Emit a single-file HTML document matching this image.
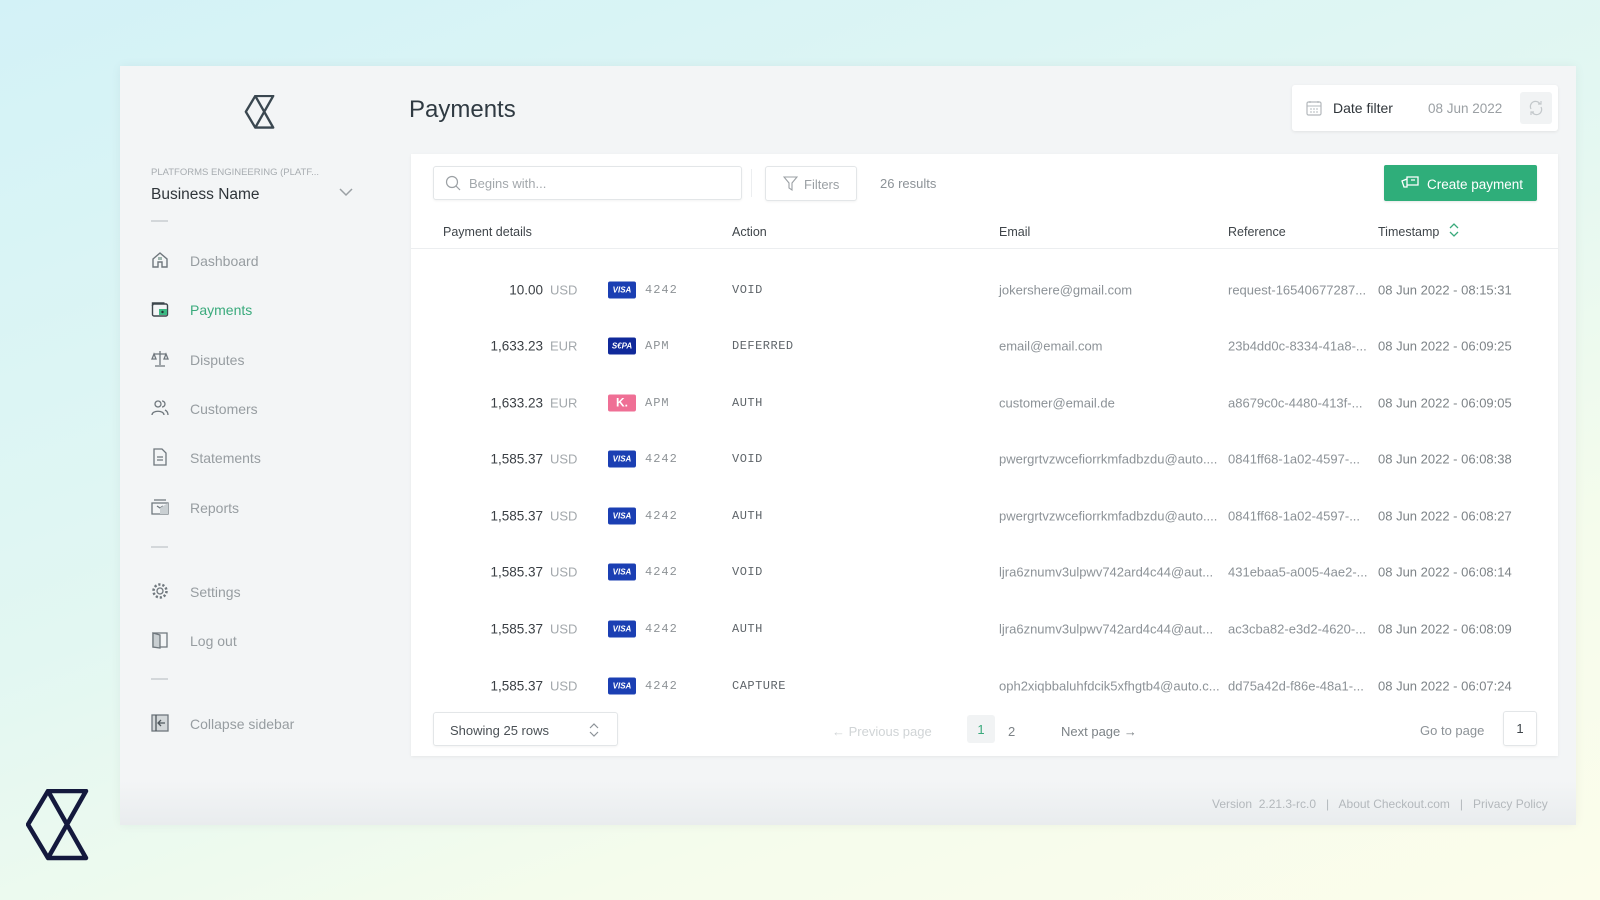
<!DOCTYPE html>
<html><head><meta charset="utf-8"><style>
*{margin:0;padding:0;box-sizing:border-box}
body{width:1600px;height:900px;overflow:hidden;position:relative;font-family:"Liberation Sans",sans-serif;
background:linear-gradient(160deg,#d3f2f7 0%,#e2f7f2 45%,#f5fcec 75%,#fcfdeb 100%);}
.win{position:absolute;left:120px;top:66px;width:1456px;height:759px;background:#f3f5f6;
background:linear-gradient(#f3f5f6 0,#f3f5f6 715px,#e9ecee 759px);box-shadow:0 0 10px rgba(0,0,0,.05)}
.a{position:absolute;white-space:nowrap}
.nav{position:absolute;left:190px;font-size:14px;color:#979da1;transform:translateY(-50%)}
.ico{position:absolute;left:151px;width:18px;height:18px;transform:translateY(-50%)}
.dash{position:absolute;left:151px;width:17px;height:2px;background:#d3d7da}
.card{position:absolute;left:411px;top:154px;width:1147px;height:602px;background:#fff;box-shadow:0 1px 3px rgba(0,0,0,.06)}
.box{position:absolute;border:1px solid #e3e6e8;border-radius:3px;background:#fff;box-shadow:0 1px 2px rgba(0,0,0,.05)}
.row{position:absolute;left:0;width:100%;font-size:13px}
.row span{position:absolute;top:1px;transform:translateY(-50%);white-space:nowrap}
.amt{right:calc(100% - 543px + 411px);color:#3a3f44;font-size:13.5px}
.cur{left:139px;color:#a3a8ac}
.badge{left:197px;width:28px;height:17px;border-radius:2px;color:#fff;font-size:8px;font-weight:bold;text-align:center;line-height:17px;font-style:italic}
.l4{left:234px;font-family:"Liberation Mono",monospace;color:#8e9397;font-size:12px;letter-spacing:1px}
.act{left:321px;font-family:"Liberation Mono",monospace;color:#5f656a;font-size:12px;letter-spacing:.5px}
.em{left:588px;color:#8c9297}
.ref{left:817px;color:#8c9297}
.ts{left:967px;color:#7d8387}
.hd{position:absolute;top:78px;font-size:12.5px;color:#3f454a;transform:translateY(-50%)}
</style></head><body>
<svg class="a" style="left:26px;top:789px" width="64" height="72" viewBox="0 0 64 72"><path d="M22 2H60L22 69H60L22 2L2 35.5L22 69" fill="none" stroke="#14193d" stroke-width="4.5" stroke-linejoin="round"/></svg>
<div class="win">
<svg class="a" style="left:124px;top:29px" width="32" height="34" viewBox="0 0 64 72"><path d="M22 2H60L22 69H60L22 2L2 35.5L22 69" fill="none" stroke="#3a4750" stroke-width="5" stroke-linejoin="round"/></svg>
</div>
<div class="a" style="left:151px;top:167px;font-size:9.5px;color:#a7acb0">PLATFORMS ENGINEERING (PLATF...</div>
<div class="a" style="left:151px;top:186px;font-size:15.5px;color:#2f353a">Business Name</div>
<svg class="a" style="left:339px;top:188px" width="14" height="9"><path d="M1 1L7 7L13 1" fill="none" stroke="#9aa0a4" stroke-width="1.5"/></svg>
<div class="dash" style="top:220px"></div>

<svg class="ico" style="top:260px" viewBox="0 0 18 18"><path d="M2 8L9 2L16 8V16H11V11H7V16H2Z" fill="none" stroke="#6f777d" stroke-width="1.4"/><rect x="7" y="6" width="4" height="3" fill="#9fb5ae"/></svg>
<div class="nav" style="top:261px">Dashboard</div>
<svg class="ico" style="top:309px" viewBox="0 0 18 18"><rect x="1.5" y="4" width="15" height="12" rx="1.5" fill="none" stroke="#3d464c" stroke-width="1.4"/><path d="M1.5 6V3h12" fill="none" stroke="#3d464c" stroke-width="1.4"/><rect x="8" y="9" width="8" height="6" fill="#3cb983"/><circle cx="11.5" cy="12" r="1.2" fill="#233"/></svg>
<div class="nav" style="top:310px;color:#3aaa7c">Payments</div>
<svg class="ico" style="top:359px" viewBox="0 0 18 18"><path d="M9 1V15M3 4H15M3 4L1 9H5ZM15 4L13 9H17ZM4 16H14" fill="none" stroke="#6f777d" stroke-width="1.3"/></svg>
<div class="nav" style="top:360px">Disputes</div>
<svg class="ico" style="top:408px" viewBox="0 0 18 18"><circle cx="7" cy="5" r="3" fill="none" stroke="#6f777d" stroke-width="1.3"/><path d="M1 16C1 11 13 11 13 16M11 2A3 3 0 0 1 11 8M14 11C16 12 17 14 17 16" fill="none" stroke="#6f777d" stroke-width="1.3"/></svg>
<div class="nav" style="top:409px">Customers</div>
<svg class="ico" style="top:457px" viewBox="0 0 18 18"><path d="M3 1H11L15 5V17H3Z M6 9H12M6 12H12" fill="none" stroke="#6f777d" stroke-width="1.3"/></svg>
<div class="nav" style="top:458px">Statements</div>
<svg class="ico" style="top:507px" viewBox="0 0 18 18"><path d="M1 5H17V16H1Z M3 2H15M6 8L9 10L12 8" fill="none" stroke="#6f777d" stroke-width="1.3"/><path d="M9 10L17 5V16H9Z" fill="#c9cfd2"/></svg>
<div class="nav" style="top:508px">Reports</div>
<div class="dash" style="top:546px"></div>
<svg class="ico" style="top:591px" viewBox="0 0 18 18"><circle cx="9" cy="9" r="3" fill="none" stroke="#6f777d" stroke-width="1.3"/><circle cx="9" cy="9" r="6.5" fill="none" stroke="#6f777d" stroke-width="2.5" stroke-dasharray="2.2 1.9"/></svg>
<div class="nav" style="top:592px">Settings</div>
<svg class="ico" style="top:640px" viewBox="0 0 18 18"><path d="M2 2H16V16H2Z" fill="none" stroke="#6f777d" stroke-width="1.3"/><path d="M2 2L9 4V17L2 16Z" fill="#c9cfd2" stroke="#6f777d" stroke-width="1.3"/></svg>
<div class="nav" style="top:641px">Log out</div>
<div class="dash" style="top:678px"></div>
<svg class="ico" style="top:723px" viewBox="0 0 18 18"><rect x="1" y="1" width="16" height="16" fill="#d3d8da" stroke="#6f777d" stroke-width="1.3"/><path d="M5 1V17M14 9H8M10 6L7 9L10 12" fill="none" stroke="#4f575d" stroke-width="1.3"/></svg>
<div class="nav" style="top:724px">Collapse sidebar</div>

<div class="a" style="left:409px;top:96px;font-size:24px;color:#2f3a42">Payments</div>
<div class="box" style="left:1292px;top:85px;width:266px;height:46px;border:none;box-shadow:0 1px 3px rgba(0,0,0,.08)">
<svg class="a" style="left:14px;top:15px" width="16" height="16" viewBox="0 0 16 16"><rect x="1" y="2" width="14" height="13" rx="1.5" fill="none" stroke="#b3b8bc" stroke-width="1.2"/><path d="M1 6H15M4 1V3M12 1V3M4 9h2M7 9h2M10 9h2M4 12h2M7 12h2M10 12h2" stroke="#b3b8bc" stroke-width="1"/></svg>
<div class="a" style="left:41px;top:15px;font-size:14px;color:#2f353a">Date filter</div>
<div class="a" style="left:136px;top:16px;font-size:13.5px;color:#9ba0a4">08 Jun 2022</div>
<div class="a" style="left:228px;top:7px;width:32px;height:32px;background:#f1f3f4;border-radius:3px"><svg style="margin:8px" width="16" height="16" viewBox="0 0 16 16"><path d="M3 9A5 5 0 0 1 12 4M13 7A5 5 0 0 1 4 12M10 4H13V1M6 12H3V15" fill="none" stroke="#c3c8cb" stroke-width="1.2"/></svg></div>
</div>

<div class="card">
<div class="box" style="left:22px;top:12px;width:309px;height:34px">
<svg class="a" style="left:11px;top:8px" width="16" height="16" viewBox="0 0 16 16"><circle cx="7" cy="7" r="5.5" fill="none" stroke="#9ba0a4" stroke-width="1.2"/><path d="M11 11L15 15" stroke="#9ba0a4" stroke-width="1.2"/></svg>
<div class="a" style="left:35px;top:9px;font-size:13px;color:#a3a8ac">Begins with...</div></div>
<div class="a" style="left:340px;top:15px;width:1px;height:28px;background:#eceef0"></div>
<div class="box" style="left:354px;top:12px;width:92px;height:35px">
<svg class="a" style="left:17px;top:9px" width="15" height="16" viewBox="0 0 15 16"><path d="M1 1H14L9 7V14L6 12V7Z" fill="none" stroke="#9ba0a4" stroke-width="1.1"/></svg>
<div class="a" style="left:38px;top:10px;font-size:13px;color:#9ba0a4">Filters</div></div>
<div class="a" style="left:469px;top:22px;font-size:13px;color:#8c9297">26 results</div>
<div class="a" style="left:973px;top:11px;width:153px;height:36px;background:#2fae7a;border-radius:2px;box-shadow:0 1px 2px rgba(0,0,0,.1)">
<svg class="a" style="left:17px;top:11px" width="18" height="13" viewBox="0 0 18 13"><path d="M6 1H17V9H6Z M1 5L6 3V11H3Z M10 4H14" fill="none" stroke="#fff" stroke-width="1.3"/></svg>
<div class="a" style="left:43px;top:12px;font-size:13.5px;color:#fff">Create payment</div></div>

<div class="hd" style="left:32px">Payment details</div>
<div class="hd" style="left:321px">Action</div>
<div class="hd" style="left:588px">Email</div>
<div class="hd" style="left:817px">Reference</div>
<div class="hd" style="left:967px">Timestamp</div>
<svg class="a" style="left:1038px;top:69px" width="10" height="14" viewBox="0 0 10 14"><path d="M1 5L5 1L9 5M1 9L5 13L9 9" fill="none" stroke="#3aaa7c" stroke-width="1.3"/></svg>
<div class="a" style="left:0;top:94px;width:100%;height:1px;background:#eceef0"></div>

<div class="row" style="top:135px"><span class="amt">10.00</span><span class="cur">USD</span><span class="badge" style="background:#1b3fb3">VISA</span><span class="l4">4242</span><span class="act">VOID</span><span class="em">jokershere@gmail.com</span><span class="ref">request-16540677287...</span><span class="ts">08 Jun 2022 - 08:15:31</span></div>
<div class="row" style="top:191px"><span class="amt">1,633.23</span><span class="cur">EUR</span><span class="badge" style="background:#10299a">S€PA</span><span class="l4">APM</span><span class="act">DEFERRED</span><span class="em">email@email.com</span><span class="ref">23b4dd0c-8334-41a8-...</span><span class="ts">08 Jun 2022 - 06:09:25</span></div>
<div class="row" style="top:248px"><span class="amt">1,633.23</span><span class="cur">EUR</span><span class="badge" style="background:#ef6f95;font-size:12px;font-style:normal">K.</span><span class="l4">APM</span><span class="act">AUTH</span><span class="em">customer@email.de</span><span class="ref">a8679c0c-4480-413f-...</span><span class="ts">08 Jun 2022 - 06:09:05</span></div>
<div class="row" style="top:304px"><span class="amt">1,585.37</span><span class="cur">USD</span><span class="badge" style="background:#1b3fb3">VISA</span><span class="l4">4242</span><span class="act">VOID</span><span class="em">pwergrtvzwcefiorrkmfadbzdu@auto....</span><span class="ref">0841ff68-1a02-4597-...</span><span class="ts">08 Jun 2022 - 06:08:38</span></div>
<div class="row" style="top:361px"><span class="amt">1,585.37</span><span class="cur">USD</span><span class="badge" style="background:#1b3fb3">VISA</span><span class="l4">4242</span><span class="act">AUTH</span><span class="em">pwergrtvzwcefiorrkmfadbzdu@auto....</span><span class="ref">0841ff68-1a02-4597-...</span><span class="ts">08 Jun 2022 - 06:08:27</span></div>
<div class="row" style="top:417px"><span class="amt">1,585.37</span><span class="cur">USD</span><span class="badge" style="background:#1b3fb3">VISA</span><span class="l4">4242</span><span class="act">VOID</span><span class="em">ljra6znumv3ulpwv742ard4c44@aut...</span><span class="ref">431ebaa5-a005-4ae2-...</span><span class="ts">08 Jun 2022 - 06:08:14</span></div>
<div class="row" style="top:474px"><span class="amt">1,585.37</span><span class="cur">USD</span><span class="badge" style="background:#1b3fb3">VISA</span><span class="l4">4242</span><span class="act">AUTH</span><span class="em">ljra6znumv3ulpwv742ard4c44@aut...</span><span class="ref">ac3cba82-e3d2-4620-...</span><span class="ts">08 Jun 2022 - 06:08:09</span></div>
<div class="row" style="top:531px"><span class="amt">1,585.37</span><span class="cur">USD</span><span class="badge" style="background:#1b3fb3">VISA</span><span class="l4">4242</span><span class="act">CAPTURE</span><span class="em">oph2xiqbbaluhfdcik5xfhgtb4@auto.c...</span><span class="ref">dd75a42d-f86e-48a1-...</span><span class="ts">08 Jun 2022 - 06:07:24</span></div>

<div class="box" style="left:22px;top:558px;width:185px;height:34px">
<div class="a" style="left:16px;top:10px;font-size:13px;color:#4a5055">Showing 25 rows</div>
<svg class="a" style="left:155px;top:10px" width="10" height="14" viewBox="0 0 10 14"><path d="M1 5L5 1L9 5M1 9L5 13L9 9" fill="none" stroke="#8c9297" stroke-width="1.2"/></svg></div>
<div class="a" style="left:421px;top:570px;font-size:13px;color:#d0d4d6">← Previous page</div>
<div class="a" style="left:556px;top:561px;width:28px;height:28px;background:#f1f3f4;border-radius:3px;text-align:center;line-height:30px;font-size:13px;color:#3aaa7c">1</div>
<div class="a" style="left:597px;top:570px;font-size:13px;color:#7d8387">2</div>
<div class="a" style="left:650px;top:570px;font-size:13px;color:#7d8387">Next page →</div>
<div class="a" style="left:1009px;top:569px;font-size:13px;color:#8c9297">Go to page</div>
<div class="box" style="left:1092px;top:557px;width:34px;height:35px;text-align:center;line-height:33px;font-size:13px;color:#3f454a">1</div>
</div>
<div class="a" style="left:1212px;top:797px;font-size:12px;color:#b3b8bc">Version&nbsp;&nbsp;2.21.3-rc.0 &nbsp;&nbsp;|&nbsp;&nbsp; About Checkout.com &nbsp;&nbsp;|&nbsp;&nbsp; Privacy Policy</div>
</body></html>
